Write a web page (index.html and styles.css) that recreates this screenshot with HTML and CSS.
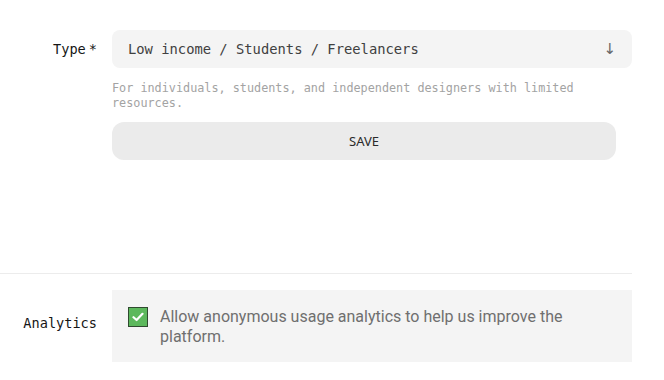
FILE: index.html
```html
<!DOCTYPE html>
<html lang="en">
<head>
  <meta charset="UTF-8">
  <meta name="viewport" content="width=device-width, initial-scale=1.0">
  <title>Plan settings</title>
  <link rel="stylesheet" href="styles.css">
</head>
<body>
  <div class="form">

    <div class="row">
      <label class="label" for="type">Type<span class="req">*</span></label>
      <div class="field">
        <div class="select" id="type">
          <span>Low income / Students / Freelancers</span>
          <span class="arrow">↓</span>
        </div>
        <p class="helper">For individuals, students, and independent designers with limited resources.</p>
        <button class="save-btn">SAVE</button>
      </div>
    </div>

    <hr class="divider">

    <div class="row row-center">
      <span class="label label-up">Analytics</span>
      <div class="field">
        <label class="check-box">
          <span class="check">
            <svg width="12" height="10" viewBox="0 0 12 10"><path d="M1.5 5.2 L4.6 8 L10.5 1.8" fill="none" stroke="#fff" stroke-width="2.2" stroke-linecap="round" stroke-linejoin="round"/></svg>
          </span>
          <span class="check-text">Allow anonymous usage analytics to help us improve the platform.</span>
        </label>
      </div>
    </div>

  </div>
</body>
</html>
```

FILE: styles.css
```css
body {
  margin: 0;
  background: #fff;
  font-family: "DejaVu Sans Mono", monospace;
  color: #161616;
}
.form {
  width: 632px;
  padding-top: 30px;
}
.row {
  display: grid;
  grid-template-columns: 97px 520px;
  column-gap: 15px;
  align-items: start;
}
.row-center {
  align-items: center;
}
.label {
  text-align: right;
  font-size: 13.6px;
  line-height: 38px;
}
.label-up {
  padding-bottom: 6px;
}
.req {
  margin-left: 3px;
}
.select {
  height: 38px;
  background: #f4f4f4;
  border-radius: 8px;
  padding: 0 16px;
  display: flex;
  align-items: center;
  justify-content: space-between;
  font-size: 13.8px;
  color: #404040;
}
.arrow {
  font-family: "DejaVu Sans", sans-serif;
  font-size: 15px;
  color: #666;
}
.helper {
  margin: 13px 0 0;
  font-size: 11.8px;
  line-height: 15px;
  color: #a3a3a3;
}
.save-btn {
  display: block;
  margin-top: 11px;
  width: 504px;
  height: 38px;
  border: none;
  border-radius: 12px;
  background: #ebebeb;
  font-family: "Noto Sans", sans-serif;
  font-size: 13px;
  color: #2a2a2a;
  cursor: pointer;
}
.divider {
  margin: 113px 0 16px;
  border: none;
  border-top: 1px solid #ececec;
}
.check-box {
  display: flex;
  gap: 12px;
  align-items: flex-start;
  background: #f4f4f4;
  padding: 17px 16px 15px;
}
.check {
  flex: none;
  width: 18px;
  height: 18px;
  background: #5cb85c;
  border: 1px solid #2f4a2f;
  display: flex;
  align-items: center;
  justify-content: center;
}
.check-text {
  font-family: Roboto, sans-serif;
  font-size: 16px;
  line-height: 20px;
  color: #6f6f6f;
}
```
